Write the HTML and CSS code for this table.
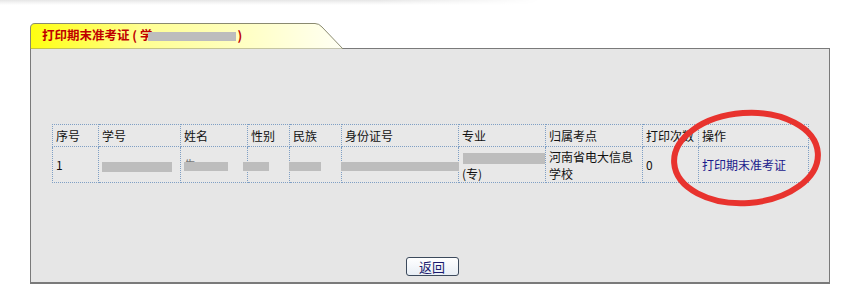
FILE: index.html
```html
<!DOCTYPE html>
<html lang="zh">
<head>
<meta charset="utf-8">
<link rel="stylesheet" href="styles.css">
</head>
<body>
<div class="topline"></div>
<div class="wrap">
  <div class="tab">
    <svg class="tab-bg" width="314" height="26" viewBox="0 0 314 26">
      <defs>
        <linearGradient id="tg" x1="0" x2="1" y1="0" y2="0">
          <stop offset="0" stop-color="#ffff10"/>
          <stop offset="0.35" stop-color="#ffff90"/>
          <stop offset="1" stop-color="#fffff4"/>
        </linearGradient>
      </defs>
      <path d="M0.5 26 V5 Q0.5 0.5 5 0.5 H285 Q289 0.5 292 4 L313 26 Z" fill="url(#tg)" stroke="#8a8a70" stroke-width="1"/>
    </svg>
    <span class="tab-text">打印期末准考证 ( 学<span class="blob tabblob"></span>)</span>
  </div>
  <div class="panel">
    <table class="grid">
      <colgroup>
        <col style="width:46px"><col style="width:82px"><col style="width:67px"><col style="width:42px"><col style="width:52px"><col style="width:117px"><col style="width:87px"><col style="width:97px"><col style="width:56px"><col style="width:110px">
      </colgroup>
      <tr class="head">
        <td>序号</td><td>学号</td><td>姓名</td><td>性别</td><td>民族</td><td>身份证号</td><td>专业</td><td>归属考点</td><td>打印次数</td><td>操作</td>
      </tr>
      <tr class="data">
        <td>1</td>
        <td><span class="blob b-id"></span></td>
        <td><span class="faint">朱</span><span class="blob b-name"></span></td>
        <td><span class="blob b-sex"></span></td>
        <td><span class="blob b-nat"></span></td>
        <td><span class="blob b-card"></span></td>
        <td><span class="blob b-major"></span><br>(专)</td>
        <td>河南省电大信息<br>学校</td>
        <td>0</td>
        <td><a class="op">打印期末准考证</a></td>
      </tr>
    </table>
    <div class="actions"><button class="btn">返回</button></div>
  </div>
  <svg class="circle" width="170" height="110" viewBox="0 0 170 110">
    <ellipse cx="85" cy="54" rx="72" ry="45" fill="none" stroke="#e8332e" stroke-width="6" transform="rotate(-4 85 54)"/>
  </svg>
</div>
</body>
</html>
```
FILE: styles.css
```css
html, body {
  margin: 0;
  padding: 0;
  background: #ffffff;
  font-family: "Noto Sans CJK SC", "Noto Sans", sans-serif;
  font-size: 12px;
  color: #111;
}
.topline {
  height: 5px;
  width: 540px;
  background: linear-gradient(to bottom, #e6e6e6, #f6f6f6 60%, #ffffff), #fff;
  -webkit-mask-image: linear-gradient(to right, #000 70%, transparent);
  mask-image: linear-gradient(to right, #000 70%, transparent);
}
.wrap {
  position: relative;
  padding: 18px 0 0 30px;
}
.tab {
  position: relative;
  width: 314px;
  height: 25px;
}
.tab-bg {
  position: absolute;
  left: 0;
  top: 0;
}
.tab-text {
  position: relative;
  display: inline-block;
  padding: 3px 0 0 12px;
  color: #c00000;
  font-size: 12.5px;
  font-weight: bold;
  line-height: 18px;
  white-space: nowrap;
}
.blob {
  display: inline-block;
  background: #bdbdbd;
  filter: blur(0.6px);
  vertical-align: middle;
}
.tabblob {
  width: 88px;
  height: 9px;
  margin-left: -4px;
  margin-right: 1px;
}
.panel {
  width: 798px;
  height: 233px;
  background: #e6e6e6;
  border: 1px solid #7a7a7a;
  border-bottom-width: 2px;
  display: flex;
  flex-direction: column;
}
.grid {
  margin: 75px 0 0 21px;
  width: 757px;
  table-layout: fixed;
  border-collapse: collapse;
  background: #e8e8e8;
}
.grid td {
  border: 1px dotted #7f9fc4;
  padding: 0 0 0 3px;
  text-align: left;
  vertical-align: middle;
  font-size: 12px;
  color: #111;
  white-space: nowrap;
  overflow: visible;
}
.head td { height: 21px; }
.data td { height: 35px; line-height: 17px; }
.faint { color: #777; }
.b-id { width: 70px; height: 10px; }
.b-name { width: 44px; height: 9px; margin-left: -12px; }
.b-sex { width: 26px; height: 9px; margin-left: -8px; }
.b-nat { width: 32px; height: 9px; margin-left: -4px; }
.b-card { width: 118px; height: 9px; margin-left: -4px; }
.b-major { width: 82px; height: 11px; margin-left: 1px; }
.op {
  color: #1a1a8c;
  text-decoration: none;
}
.actions {
  margin-top: auto;
  display: flex;
  justify-content: center;
  padding: 0 0 6px 0;
}
.btn {
  width: 53px;
  height: 19px;
  padding: 0;
  margin-left: 4px;
  font-family: "Noto Sans CJK SC", sans-serif;
  font-size: 13px;
  line-height: 15px;
  color: #1a1a6e;
  background: linear-gradient(#ffffff, #e8eef5);
  border: 1px solid #3c4a5c;
  border-radius: 3px;
}
.circle {
  position: absolute;
  left: 661px;
  top: 99px;
}
```
